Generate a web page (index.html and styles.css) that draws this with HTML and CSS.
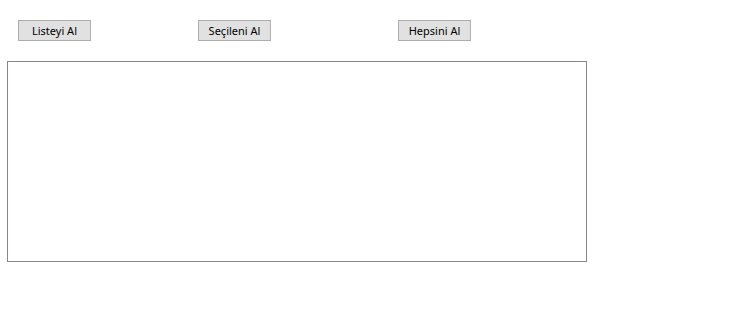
FILE: index.html
```html
<!DOCTYPE html>
<html lang="tr">
<head>
<meta charset="utf-8">
<title>Liste</title>
<link rel="stylesheet" href="styles.css">
</head>
<body>
<div class="form">
  <div class="toolbar">
    <button class="btn btn-list">Listeyi Al</button>
    <button class="btn btn-selected">Seçileni Al</button>
    <button class="btn btn-all">Hepsini Al</button>
  </div>
  <div class="listbox"></div>
</div>
</body>
</html>
```

FILE: styles.css
```css
html, body {
  margin: 0;
  padding: 0;
  background: #ffffff;
}
.form {
  width: 741px;
  height: 323px;
  font-family: "Noto Sans", "Open Sans", sans-serif;
  font-size: 11px;
  color: #000000;
}
.toolbar {
  display: flex;
  align-items: flex-start;
  padding-top: 20px;
  padding-left: 18px;
  height: 21px;
}
.btn {
  box-sizing: border-box;
  width: 73px;
  height: 21px;
  margin: 0;
  padding: 0;
  background: #e1e1e1;
  border: 1px solid #adadad;
  border-radius: 0;
  font-family: inherit;
  font-size: inherit;
  color: #000000;
  line-height: 19px;
  text-align: center;
}
.btn-selected {
  margin-left: 107px;
}
.btn-all {
  margin-left: 127px;
}
.listbox {
  box-sizing: border-box;
  margin-top: 20px;
  margin-left: 7px;
  width: 580px;
  height: 201px;
  border: 1px solid #828790;
  background: #ffffff;
}
```
